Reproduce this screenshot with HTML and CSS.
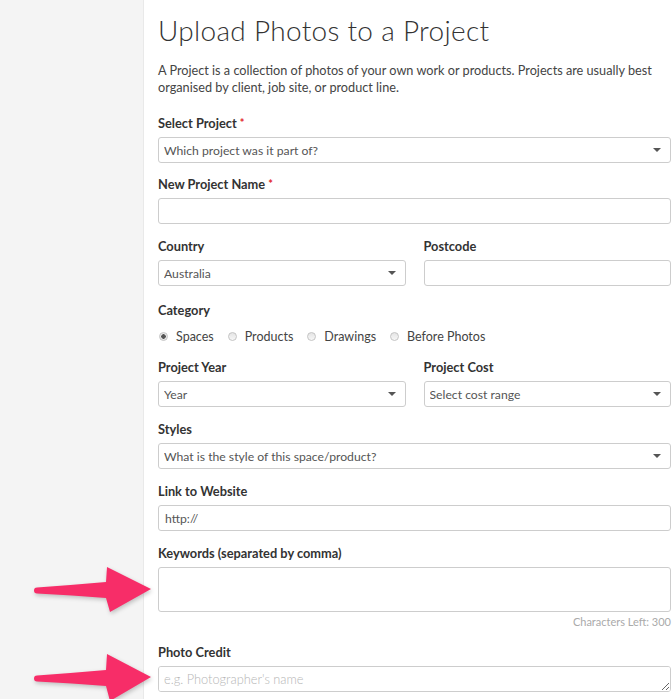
FILE: index.html
```html
<!DOCTYPE html>
<html lang="en">
    <head>
        <meta charset="UTF-8" />
        <meta name="viewport" content="width=device-width, initial-scale=1.0" />
        <title>Upload Photos to a Project</title>
        <link rel="stylesheet" href="styles.css">
    </head>
    <body>
        <div class="page">
            <aside class="sidebar"></aside>

            <main class="content">
                <h1 class="title">Upload Photos to a Project</h1>
                <p class="intro">A Project is a collection of photos of your own work or products. Projects are usually best organised by client, job site, or product line.</p>

                <form class="upload-form">
                    <div class="field field-first">
                        <label>Select Project <span class="req">*</span></label>
                        <div class="select">
                            <select>
                                <option>Which project was it part of?</option>
                            </select>
                        </div>
                    </div>

                    <div class="field">
                        <label>New Project Name <span class="req">*</span></label>
                        <input type="text" class="input">
                    </div>

                    <div class="row">
                        <div class="field">
                            <label>Country</label>
                            <div class="select">
                                <select>
                                    <option>Australia</option>
                                </select>
                            </div>
                        </div>
                        <div class="field">
                            <label>Postcode</label>
                            <input type="text" class="input">
                        </div>
                    </div>

                    <div class="field field-radios">
                        <label>Category</label>
                        <div class="radios">
                            <label class="radio"><input type="radio" name="category" checked> Spaces</label>
                            <label class="radio"><input type="radio" name="category"> Products</label>
                            <label class="radio"><input type="radio" name="category"> Drawings</label>
                            <label class="radio"><input type="radio" name="category"> Before Photos</label>
                        </div>
                    </div>

                    <div class="row">
                        <div class="field">
                            <label>Project Year</label>
                            <div class="select">
                                <select>
                                    <option>Year</option>
                                </select>
                            </div>
                        </div>
                        <div class="field">
                            <label>Project Cost</label>
                            <div class="select">
                                <select>
                                    <option>Select cost range</option>
                                </select>
                            </div>
                        </div>
                    </div>

                    <div class="field">
                        <label>Styles</label>
                        <div class="select">
                            <select>
                                <option>What is the style of this space/product?</option>
                            </select>
                        </div>
                    </div>

                    <div class="field">
                        <label>Link to Website</label>
                        <input type="text" class="input" value="http://">
                    </div>

                    <div class="field field-keywords">
                        <label>Keywords (separated by comma)</label>
                        <textarea class="input keywords"></textarea>
                        <div class="counter">Characters Left: 300</div>
                    </div>

                    <div class="field">
                        <label>Photo Credit</label>
                        <textarea class="input credit" placeholder="e.g. Photographer's name"></textarea>
                    </div>
                </form>
            </main>

            <!-- pointer arrows over the two new fields -->
            <svg class="arrows" width="160" height="699" viewBox="0 0 160 699">
                <path class="arrow" d="M37,587.5 Q72,585 106,582 L107,567 L151,589 L110,612 L106,598 Q72,595 37,593.5 A3,3 0 0 1 37,587.5 Z" />
                <path class="arrow" d="M37,675.5 Q72,673 106,670 L107,654 L151,677 L110,701 L106,686 Q72,683 37,681.5 A3,3 0 0 1 37,675.5 Z" />
            </svg>
        </div>
    </body>
</html>
```

FILE: styles.css
```css
* {
    margin: 0;
    padding: 0;
    box-sizing: border-box;
}

body {
    font-family: Lato, "Open Sans", sans-serif;
    color: #444;
    background: #fff;
    height: 699px;
    overflow: hidden;
}

.page {
    position: relative;
    display: flex;
    min-height: 699px;
}

.sidebar {
    width: 144px;
    flex-shrink: 0;
    background: #f4f4f4;
    border-right: 1px solid #e9e9e9;
}

.content {
    width: 513px;
    margin-left: 14px;
    padding-top: 14px;
}

.title {
    font-size: 28px;
    line-height: 32px;
    font-weight: 300;
    letter-spacing: 0.3px;
    color: #333;
    margin-bottom: 16px;
}

.intro {
    font-size: 12.7px;
    line-height: 17px;
    color: #444;
    margin-bottom: 19px;
}

.field {
    margin-bottom: 14px;
}

.field-first {
    margin-bottom: 13px;
}

.field > label {
    display: block;
    font-size: 12.8px;
    line-height: 16px;
    font-weight: 700;
    color: #333;
    margin-bottom: 6px;
}

.req {
    color: #e2262e;
    font-size: 11px;
    vertical-align: top;
}

.row {
    display: grid;
    grid-template-columns: 1fr 1fr;
    gap: 18px;
}

.input,
.select select {
    display: block;
    width: 100%;
    height: 26px;
    padding: 0 6px;
    border: 1px solid #cdcdcd;
    border-radius: 3px;
    background: #fff;
    font-family: Lato, "Open Sans", sans-serif;
    font-size: 12.2px;
    color: #555;
    outline: none;
}

.select {
    position: relative;
}

.select select {
    appearance: none;
    -webkit-appearance: none;
    padding-left: 5px;
}

.select::after {
    content: "";
    position: absolute;
    right: 10px;
    top: 11px;
    border-left: 4px solid transparent;
    border-right: 4px solid transparent;
    border-top: 4px solid #555;
    pointer-events: none;
}

.field-radios {
    margin-top: 2px;
    margin-bottom: 11px;
}

.radios {
    display: flex;
    align-items: center;
    height: 24px;
}

.radio {
    display: flex;
    align-items: center;
    font-size: 12.5px;
    color: #444;
    margin-right: 13px;
}

.radio input {
    appearance: none;
    -webkit-appearance: none;
    width: 9px;
    height: 9px;
    margin: 0 8px 0 1px;
    border: 1px solid #c4c4c4;
    border-radius: 50%;
    background: linear-gradient(#e4e4e4, #f7f7f7);
}

.radio input:checked {
    background: radial-gradient(circle, #555 0 2px, #e8e8e8 2.5px);
}

.field-keywords {
    margin-bottom: 14px;
}

.keywords {
    height: 45px;
    resize: none;
    padding: 6px;
}

.counter {
    margin-top: 2px;
    text-align: right;
    font-size: 11px;
    line-height: 16px;
    color: #aaa;
}

.credit {
    height: 26px;
    padding: 5px 5px;
    line-height: 15px;
}

.credit::placeholder {
    color: #b5b5b5;
    font-weight: 300;
    font-size: 12.8px;
}

.arrows {
    position: absolute;
    left: 0;
    top: 0;
    pointer-events: none;
    filter: drop-shadow(1px 2px 2px rgba(0, 0, 0, 0.22));
}

.arrow {
    fill: #f72d68;
}
```
